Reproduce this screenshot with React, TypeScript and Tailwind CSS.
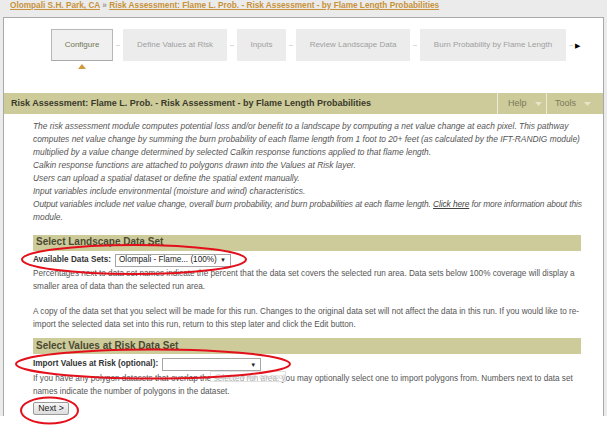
import React from "react";

const F = { fontFamily: "'Liberation Sans', Arial, sans-serif" };

function Step({ label, active, w }: { label: string; active?: boolean; w: string }) {
  return (
    <div
      className={`${w} h-[32px] flex items-center justify-center whitespace-nowrap text-[8px] ${
        active
          ? "bg-[#f0f0f0] border border-[#b8b8b8] border-b-[#a8a8a8] text-[#6f7752]"
          : "bg-[#ececec] text-[#a0a0a0]"
      }`}
    >
      {label}
    </div>
  );
}

function Dash() {
  return (
    <div className="w-[10px] flex items-center justify-center">
      <div className="w-[4px] h-px bg-[#dadada]" />
    </div>
  );
}

function Caret() {
  return (
    <svg width="7" height="4" viewBox="0 0 7 4" className="ml-[8px]">
      <path d="M0 0 L7 0 L3.5 4 Z" fill="#e6e5cb" />
    </svg>
  );
}

export default function App() {
  return (
    <div className="relative w-[607px] h-[427px] overflow-hidden bg-[#ebebeb]" style={F}>
      <div className="h-[17px] pl-[10px] pt-[1px] text-[8.25px] font-bold leading-[10px]">
        <span className="text-[#c8923a] underline">Olompali S.H. Park, CA</span>
        <span className="text-[#9a9a9a]"> » </span>
        <span className="text-[#c8923a] underline">Risk Assessment: Flame L. Prob. - Risk Assessment - by Flame Length Probabilities</span>
      </div>
      <div className="mx-[3px] h-[399px] bg-white border-l border-r border-t border-[#a9a9a9] flex flex-col">
        <div className="h-[76px] pt-[11px] pl-[47px]">
          <div className="flex items-center">
            <Step label="Configure" active w="w-[62px]" />
            <Dash />
            <Step label="Define Values at Risk" w="w-[104px]" />
            <Dash />
            <Step label="Inputs" w="w-[49px]" />
            <Dash />
            <Step label="Review Landscape Data" w="w-[114px]" />
            <Dash />
            <Step label="Burn Probability by Flame Length" w="w-[146px]" />
            <Dash />
            <span className="text-[7px] leading-[7px] text-black -ml-[1px]">▶</span>
          </div>
          <div className="ml-[27px] mt-[3px] w-0 h-0 border-l-[4px] border-r-[4px] border-b-[5px] border-l-transparent border-r-transparent border-b-[#d19a3c]" />
        </div>
        <div className="h-[22px] bg-[#cdcb9a] flex items-center">
          <div className="flex-1 pl-[7px] text-[9px] font-bold text-[#3b3a2a] whitespace-nowrap">
            Risk Assessment: Flame L. Prob. - Risk Assessment - by Flame Length Probabilities
          </div>
          <div className="w-[49px] h-full flex items-center border-l border-[#ecebd6] pl-[10px] text-[9px] text-[#7a795c]">
            Help <Caret />
          </div>
          <div className="w-[57px] h-full flex items-center border-l border-[#ecebd6] pl-[8px] text-[9px] text-[#7a795c]">
            Tools <Caret />
          </div>
        </div>
        <div className="pl-[29px] pr-[22px] pt-[6px]">
          <div className="italic text-[8.4px] leading-[12.9px] text-[#555]">
            <div className="whitespace-nowrap">The risk assessment module computes potential loss and/or benefit to a landscape by computing a net value change at each pixel. This pathway</div>
            <div className="whitespace-nowrap">computes net value change by summing the burn probability of each flame length from 1 foot to 20+ feet (as calculated by the IFT-RANDIG module)</div>
            <div className="whitespace-nowrap">multiplied by a value change determined by selected Calkin response functions applied to that flame length.</div>
            <div>Calkin response functions are attached to polygons drawn into the Values at Risk layer.</div>
            <div>Users can upload a spatial dataset or define the spatial extent manually.</div>
            <div>Input variables include environmental (moisture and wind) characteristics.</div>
            <div className="whitespace-nowrap tracking-[-0.1px]">
              Output variables include net value change, overall burn probability, and burn probabilities at each flame length.{" "}
              <span className="underline text-[#444]">Click here</span> for more information about this
            </div>
            <div>module.</div>
          </div>
          <div className="mt-[11px] text-[8.2px] text-[#555] leading-[12.9px]">
            <div className="h-[16px] bg-[#cdcb9a] pl-[3px] flex items-center text-[10px] font-bold text-[#4a4a33]">Select Landscape Data Set</div>
            <div className="mt-[2px] flex items-center h-[15px]">
              <span className="font-bold text-[8.2px] text-[#333]">Available Data Sets:</span>
              <div className="ml-[4px] w-[116px] h-[13px] border border-[#a6a6a6] bg-white flex items-center pl-[3px] pr-[4px] text-[#222]">
                <span className="flex-1 whitespace-nowrap">Olompali - Flame... (100%)</span>
                <span className="text-[6px] leading-[6px]">▼</span>
              </div>
            </div>
            <div className="whitespace-nowrap">Percentages next to data set names indicate the percent that the data set covers the selected run area. Data sets below 100% coverage will display a</div>
            <div>smaller area of data than the selected run area.</div>
            <div className="h-[13px]" />
            <div className="whitespace-nowrap">A copy of the data set that you select will be made for this run. Changes to the original data set will not affect the data in this run. If you would like to re-</div>
            <div>import the selected data set into this run, return to this step later and click the Edit button.</div>
            <div className="h-[16px] mt-[6px] bg-[#cdcb9a] pl-[3px] flex items-center text-[10px] font-bold text-[#4a4a33]">Select Values at Risk Data Set</div>
            <div className="mt-[3px] flex items-center h-[15px]">
              <span className="font-bold text-[8.2px] text-[#333]">Import Values at Risk (optional):</span>
              <div className="ml-[4px] w-[99px] h-[13px] border border-[#a6a6a6] bg-white flex items-center justify-end pr-[4px] text-[#222]">
                <span className="text-[6px] leading-[6px]">▼</span>
              </div>
            </div>
            <div className="mt-[1px] whitespace-nowrap">If you have any polygon datasets that overlap the selected run area, you may optionally select one to import polygons from. Numbers next to data set</div>
            <div>names indicate the number of polygons in the dataset.</div>
            <button className="mt-[3px] h-[13px] w-[36px] border border-[#9a9a9a] rounded-[2px] bg-gradient-to-b from-[#f6f6f6] to-[#dddddd] text-[#222] text-[8.8px] leading-[11px]">Next &gt;</button>
          </div>
        </div>
      </div>
      <div className="h-[11px] bg-white" />
      <div className="absolute left-[210px] top-[371px] w-[76px] h-[11px] bg-white/50 border border-[#e2e2e2] text-[8px] text-[#cfcfcf] pl-[4px] leading-[9px] whitespace-nowrap">Centre map on spot</div>
      <svg className="absolute inset-0 pointer-events-none" width="607" height="427" viewBox="0 0 607 427">
        <g fill="none" stroke="#e3101c" strokeWidth="2">
          <ellipse cx="134" cy="259.5" rx="112" ry="14.5" />
          <ellipse cx="153" cy="364" rx="137" ry="14.5" />
          <ellipse cx="49.5" cy="410.5" rx="28.5" ry="13" />
        </g>
      </svg>
    </div>
  );
}
